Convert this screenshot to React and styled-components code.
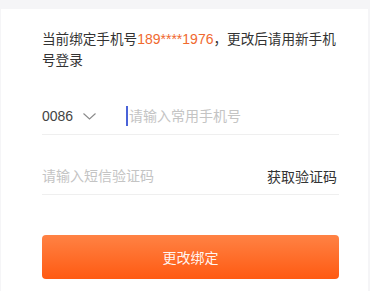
import React from 'react'
import styled, { createGlobalStyle } from 'styled-components'

const GlobalStyle = createGlobalStyle`
  html, body {
    margin: 0;
    padding: 0;
    background: #f5f5f7;
  }
  body {
    font-family: "Liberation Sans", "Noto Sans CJK SC", sans-serif;
    -webkit-font-smoothing: antialiased;
  }
`

const Page = styled.div`
  padding: 9px 2px 0 1px;
  min-height: 282px;
`

const Card = styled.div`
  background: #fff;
  padding: 20px 29px 13px 41px;
  min-height: 260px;
  box-sizing: border-box;
`

const Notice = styled.p`
  margin: 0;
  font-size: 13.6px;
  line-height: 21px;
  color: #333;
`

const Phone = styled.span`
  color: #f0692f;
  font-size: 14px;
`

const Field = styled.div`
  display: flex;
  align-items: center;
  height: 22px;
  padding: ${p => p.$top}px 0 7px;
  border-bottom: 1px solid #efefef;
`

const Prefix = styled.div`
  display: flex;
  align-items: center;
  gap: 10px;
  width: 84px;
  font-size: 14px;
  color: #444;
`

const Caret = styled.span`
  width: 2px;
  height: 20px;
  background: #4a63d8;
  margin-right: 1px;
`

const Input = styled.input`
  flex: 1;
  min-width: 0;
  border: none;
  outline: none;
  padding: 0;
  font: inherit;
  font-size: 14px;
  color: #333;
  background: transparent;
  &::placeholder {
    color: #c4c4c4;
  }
`

const CodeLink = styled.button`
  border: none;
  background: none;
  padding: 0 2px 0 0;
  font: inherit;
  font-size: 14px;
  color: #333;
`

const Submit = styled.button`
  display: block;
  width: 100%;
  height: 44px;
  margin-top: 40px;
  border: none;
  border-radius: 4px;
  background: linear-gradient(180deg, #ff8244 0%, #ff5a12 100%);
  color: rgba(255, 255, 255, 0.95);
  font: inherit;
  font-size: 14px;
`

const Chevron = () => (
  <svg width="13" height="7" viewBox="0 0 13 7" fill="none">
    <polyline points="0.5,0.5 6.5,6 12.5,0.5" stroke="#8a8a8a" strokeWidth="1.1" />
  </svg>
)

export default function App() {
  return (
    <Page>
      <GlobalStyle />
      <Card>
        <Notice>
          当前绑定手机号<Phone>189****1976</Phone>，更改后请用新手机号登录
        </Notice>
        <Field $top={34}>
          <Prefix>
            0086 <Chevron />
          </Prefix>
          <Caret />
          <Input placeholder="请输入常用手机号" />
        </Field>
        <Field $top={30}>
          <Input placeholder="请输入短信验证码" />
          <CodeLink>获取验证码</CodeLink>
        </Field>
        <Submit>更改绑定</Submit>
      </Card>
    </Page>
  )
}
